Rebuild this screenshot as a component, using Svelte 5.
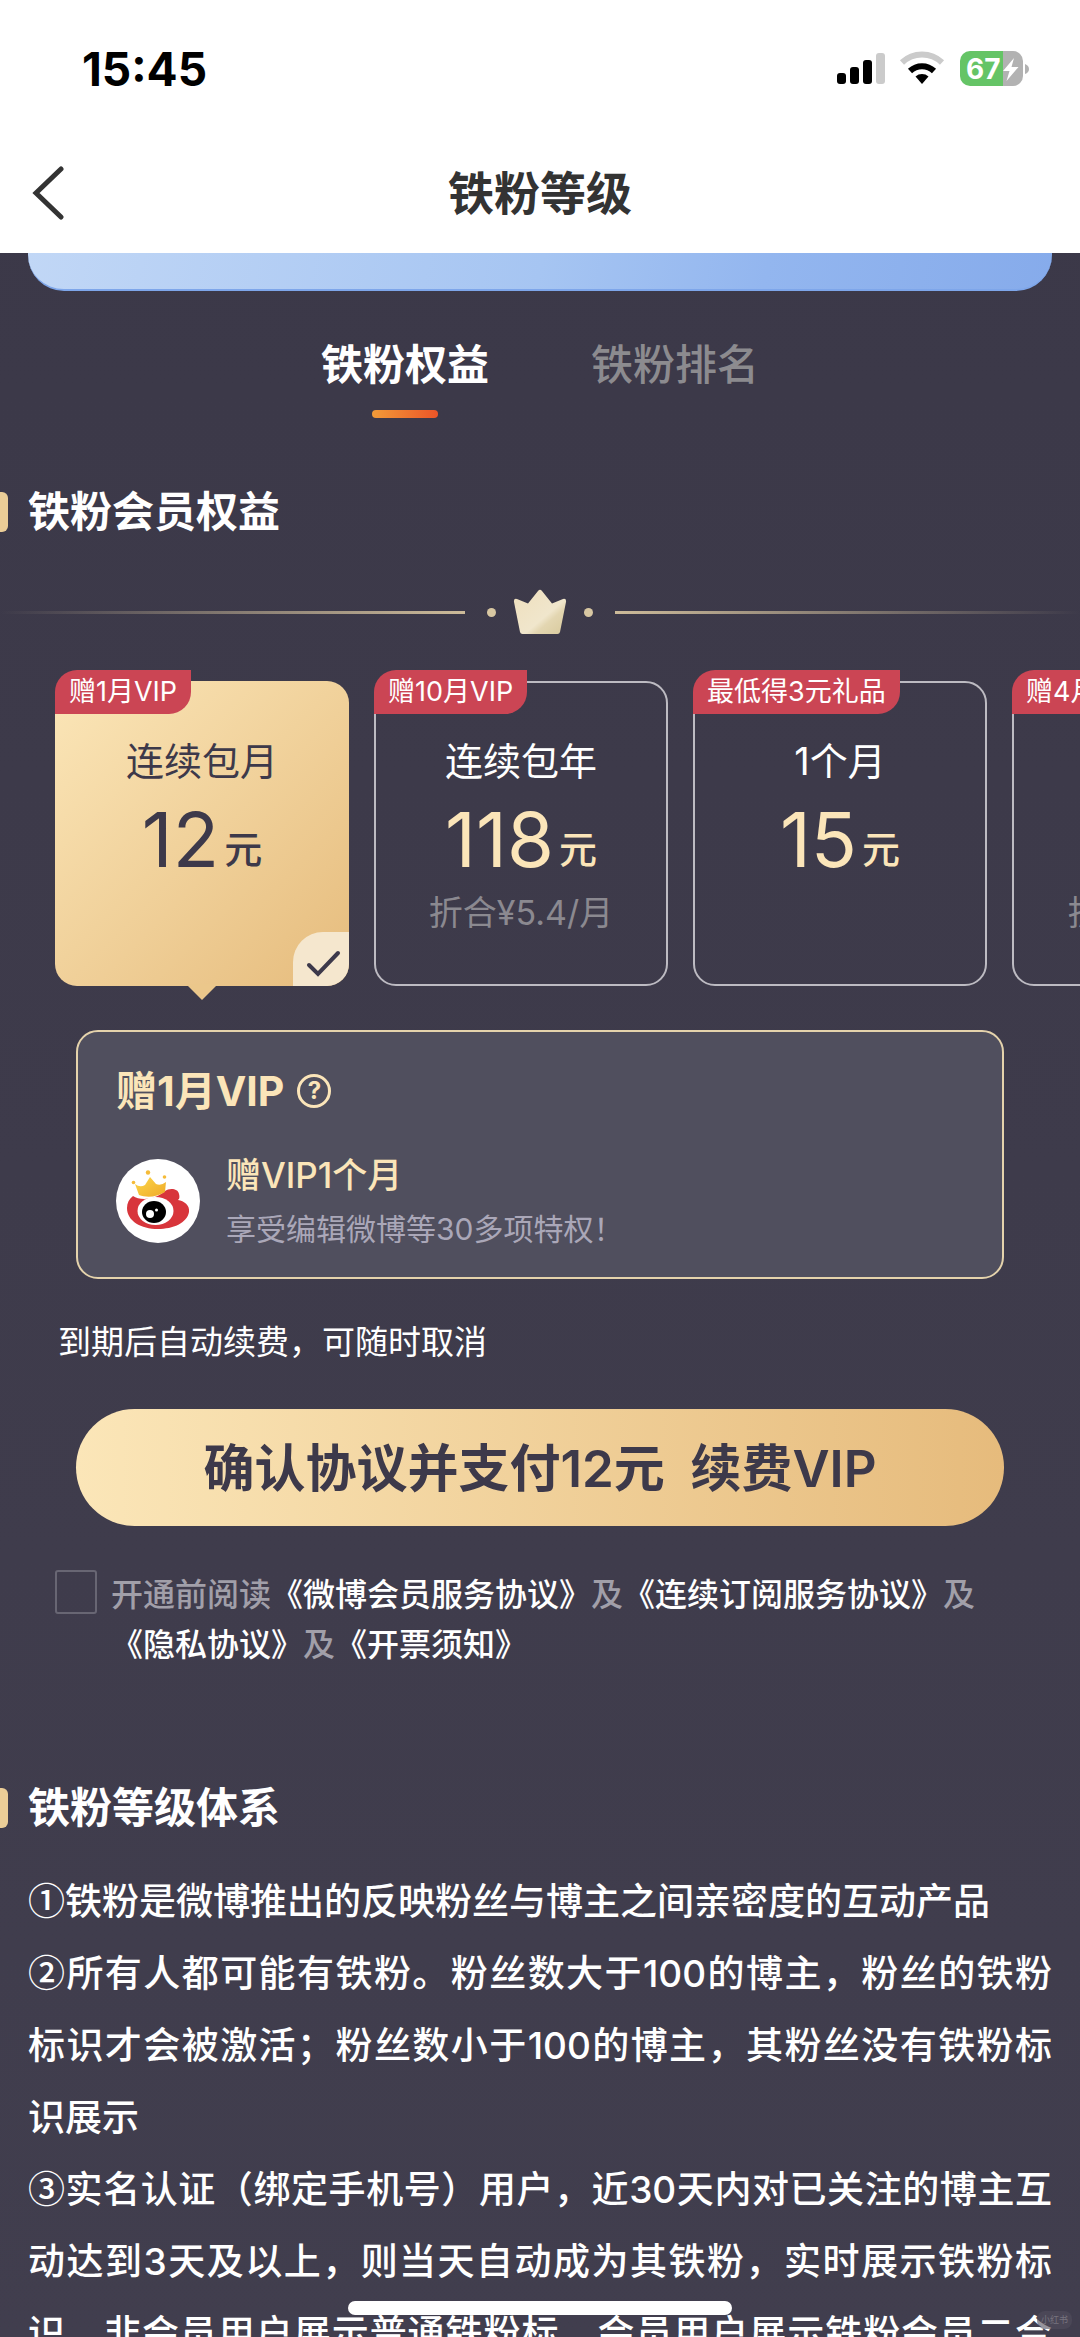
<script lang="ts">
  type Plan = { id: string; badge: string; name: string; price: number; note?: string };

  const tabs = ['铁粉权益', '铁粉排名'];
  const plans: Plan[] = [
    { id: 'month-auto', badge: '赠1月VIP', name: '连续包月', price: 12 },
    { id: 'year-auto', badge: '赠10月VIP', name: '连续包年', price: 118, note: '折合¥5.4/月' },
    { id: 'month', badge: '最低得3元礼品', name: '1个月', price: 15 },
    { id: 'season-auto', badge: '赠4月VIP', name: '连续包季', price: 35, note: '折合¥9.8/月' },
  ];
  const rules = [
    ['①', '铁粉是微博推出的反映粉丝与博主之间亲密度的互动产品'],
    [
      '②',
      '所有人都可能有铁粉。粉丝数大于100的博主，粉丝的铁粉标识才会被激活；粉丝数小于100的博主，其粉丝没有铁粉标识展示',
    ],
    [
      '③',
      '实名认证（绑定手机号）用户，近30天内对已关注的博主互动达到3天及以上，则当天自动成为其铁粉，实时展示铁粉标识，非会员用户展示普通铁粉标，会员用户展示铁粉会员二合一标识',
    ],
  ];

  let activeTab = $state(0);
  let selected = $state('month-auto');
  let agreed = $state(false);
  let current = $derived(plans.find((p) => p.id === selected) ?? plans[0]);
</script>

<div class="screen">
  <header>
    <div class="status">
      <time>15:45</time>
      <svg class="status-icons" viewBox="0 0 194 36" aria-hidden="true">
        <rect x="1" y="22" width="9" height="11" rx="3" />
        <rect x="14" y="16" width="9" height="17" rx="3" />
        <rect x="27" y="9" width="9" height="24" rx="3" />
        <rect x="40" y="2" width="9" height="31" rx="3" fill="#cbcbcb" />
        <g fill="none" stroke-width="6">
          <path d="M66 11.5a29 29 0 0 1 40 0" stroke="#cbcbcb" />
          <path d="M74 20a17.500 17.500 0 0 1 24 0" stroke="#000" />
        </g>
        <path d="M79.500 25.500a10 10 0 0 1 13 0L86 33z" />
        <path d="M134 0h33v35h-33a10 10 0 0 1-10-10V10a10 10 0 0 1 10-10z" fill="#65c466" />
        <path d="M167 0h10a10 10 0 0 1 10 10v15a10 10 0 0 1-10 10h-10z" fill="#b2b2b2" />
        <path d="M189 13q4 1.500 4 5t-4 5z" fill="#b2b2b2" />
        <text x="130" y="28" class="battery">67</text>
        <path d="M178 7l-11 13h6.500l-3 10 12-14h-7z" fill="#fff" />
      </svg>
    </div>
    <div class="titlebar">
      <button class="back" aria-label="返回">
        <svg viewBox="0 0 32 54"><path d="M29 3 4 27l25 24" fill="none" stroke="#333" stroke-width="5" stroke-linecap="round" /></svg>
      </button>
      <h1>铁粉等级</h1>
    </div>
  </header>

  <main>
    <div class="level-card"></div>

    <nav class="tabs">
      {#each tabs as tab, i}
        <button class:active={activeTab === i} onclick={() => (activeTab = i)}>{tab}</button>
      {/each}
    </nav>

    <h2>铁粉会员权益</h2>

    <div class="divider">
      <span class="line"></span>
      <span class="dot"></span>
      <svg viewBox="0 0 54 46" aria-hidden="true">
        <defs>
          <linearGradient id="crown" x1="0" y1="0" x2="1" y2="1">
            <stop offset="0" stop-color="#efdfbd" />
            <stop offset="0.600" stop-color="#f0e6cc" />
            <stop offset="0.700" stop-color="#e3d6b1" />
            <stop offset="1" stop-color="#d8c99c" />
          </linearGradient>
        </defs>
        <path d="M1 13q-.5-4 3-3l11 4.500L25 2q2-2.500 4 0l10 12.500L50 10q3.500-1 3 3l-6 30q-.5 2-2.500 2h-35Q7.500 45 7 43z" fill="url(#crown)" />
      </svg>
      <span class="dot"></span>
      <span class="line right"></span>
    </div>

    <div class="plans">
      {#each plans as plan (plan.id)}
        <label class="plan" class:selected={selected === plan.id}>
          <input type="radio" name="plan" value={plan.id} bind:group={selected} />
          <span class="badge">{plan.badge}</span>
          <span class="name">{plan.name}</span>
          <span class="price"><b>{plan.price}</b><span class="unit">元</span></span>
          {#if plan.note}
            <span class="note">{plan.note}</span>
          {/if}
          {#if selected === plan.id}
            <span class="check">
              <svg viewBox="0 0 56 54"><path d="M16 33l9 9 20-21" fill="none" stroke="#3d394a" stroke-width="4" stroke-linecap="round" /></svg>
            </span>
            <span class="arrow"></span>
          {/if}
        </label>
      {/each}
    </div>

    <section class="gift">
      <h3>
        {current.badge}
        <button class="help" aria-label="说明">?</button>
      </h3>
      <div class="gift-row">
        <svg class="logo" viewBox="0 0 84 84" aria-hidden="true">
          <defs>
            <linearGradient id="gold" x1="0" y1="0" x2="1" y2="1">
              <stop offset="0" stop-color="#fbd84a" />
              <stop offset="1" stop-color="#f0a928" />
            </linearGradient>
          </defs>
          <circle cx="42" cy="42" r="42" fill="#fff" />
          <path d="M17 37c7 5 22 4 32-5 4-3 13-3 14 3 1 4 0 5-1 6 6 1 12 5 11 12-2 11-16 17-31 17-17 0-31-8-31-21 0-5 2-9 6-12z" fill="#d8353b" />
          <ellipse cx="39.500" cy="52" rx="18" ry="14" fill="#fff" />
          <ellipse cx="38" cy="53" rx="12" ry="11" fill="#000" />
          <circle cx="34" cy="55" r="4" fill="#fff" />
          <circle cx="40.500" cy="51" r="1.500" fill="#fff" />
          <path d="M19 25q5 4 10 1l5-8 6 7q5 2 10-2l-1 10c-8 5-18 6-26 3z" fill="url(#gold)" />
          <g fill="#f5bb38">
            <circle cx="17.500" cy="23.500" r="1.800" />
            <circle cx="32" cy="13.500" r="2.200" />
            <circle cx="48.500" cy="18" r="1.800" />
          </g>
        </svg>
        <div class="gift-text">
          <strong>赠VIP1个月</strong>
          <span>享受编辑微博等30多项特权！</span>
        </div>
      </div>
    </section>

    <p class="renew">到期后自动续费，可随时取消</p>

    <button class="pay">确认协议并支付{current.price}元&nbsp;&nbsp;续费VIP</button>

    <div class="agreement">
      <input id="agree" type="checkbox" bind:checked={agreed} />
      <label for="agree"
        >开通前阅读<a href="#member">《微博会员服务协议》</a>及<a href="#subscribe">《连续订阅服务协议》</a>及<a href="#privacy">《隐私协议》</a>及<a href="#invoice">《开票须知》</a></label
      >
    </div>

    <h2 class="system">铁粉等级体系</h2>

    <div class="rules">
      {#each rules as [mark, text]}
        <p><span class="mark">{mark}</span>{text}</p>
      {/each}
    </div>
  </main>

  <div class="home-bar"></div>
  <span class="watermark">小红书</span>
</div>

<style>
  :global(body) {
    margin: 0;
  }

  .screen {
    position: relative;
    display: flex;
    flex-direction: column;
    height: 100vh;
    overflow: hidden;
    background: linear-gradient(#3b3848, #413e4e);
    color: #fff;
    font-family: Inter, 'Noto Sans CJK SC', sans-serif;
  }

  button {
    padding: 0;
    border: none;
    background: none;
    color: inherit;
    font: inherit;
    cursor: pointer;
  }

  h1,
  h2,
  h3,
  p {
    margin: 0;
  }

  header {
    flex: none;
    background: #fff;
    color: #333;
  }

  .status {
    display: flex;
    justify-content: space-between;
    align-items: center;
    height: 50px;
    padding: 44px 50px 38px 82px;
  }

  .status time {
    color: #000;
    font-size: 46px;
    font-weight: 700;
    line-height: 50px;
  }

  .status-icons {
    width: 194px;
    height: 36px;
  }

  .battery {
    fill: #fff;
    font-size: 28px;
    font-weight: 700;
  }

  .titlebar {
    display: grid;
    grid-template-columns: 80px 1fr 80px;
    align-items: center;
    height: 121px;
  }

  .back {
    padding-left: 32px;
    text-align: left;
  }

  .back svg {
    display: block;
    width: 32px;
    height: 54px;
  }

  h1 {
    font-size: 46px;
    line-height: 60px;
    text-align: center;
  }

  main {
    flex: 1;
    min-height: 0;
    overflow: hidden auto;
    scrollbar-width: none;
  }

  .level-card {
    box-sizing: border-box;
    height: 38px;
    margin: 0 28px;
    border-bottom: 2px solid #7ea6ea;
    border-radius: 0 0 36px 36px;
    background: linear-gradient(100deg, #c1d7f6, #a6c5f2 50%, #93b6ef 72%, #86abeb);
  }

  .tabs {
    display: flex;
    justify-content: center;
    gap: 102px;
    margin-top: 44px;
    font-size: 42px;
    line-height: 60px;
  }

  .tabs button {
    display: flex;
    flex-direction: column;
    align-items: center;
    gap: 15px;
    color: #8c8b8f;
    font-weight: 500;
  }

  .tabs button::after {
    content: '';
    width: 66px;
    height: 8px;
    border-radius: 4px;
  }

  .tabs .active {
    color: #fff;
    font-weight: 700;
  }

  .tabs .active::after {
    background: linear-gradient(90deg, #f29b38, #eb5528);
  }

  h2 {
    display: flex;
    align-items: center;
    gap: 20px;
    margin-top: 64px;
    font-size: 42px;
    line-height: 60px;
  }

  h2::before {
    content: '';
    width: 8px;
    height: 40px;
    border-radius: 0 6px 6px 0;
    background: #ebcd97;
  }

  .system {
    margin-top: 108px;
  }

  .divider {
    display: flex;
    justify-content: center;
    align-items: center;
    gap: 22px;
    margin-top: 47px;
  }

  .divider svg {
    width: 54px;
    height: 46px;
    margin: 0 -5px;
  }

  .line {
    flex: 1;
    height: 3px;
    background: linear-gradient(90deg, transparent, #cdbb9a);
  }

  .line.right {
    background: linear-gradient(270deg, transparent, #cdbb9a);
  }

  .dot {
    width: 9px;
    height: 9px;
    border-radius: 50%;
    background: #d8c7a2;
  }

  .plans {
    display: flex;
    gap: 25px;
    padding: 46px 55px 44px;
    overflow: auto hidden;
    scrollbar-width: none;
  }

  .plan {
    position: relative;
    box-sizing: border-box;
    flex: none;
    display: flex;
    flex-direction: column;
    align-items: center;
    gap: 14px;
    width: 294px;
    height: 305px;
    padding-top: 54px;
    border: 2px solid #bdbbc2;
    border-radius: 22px;
    cursor: pointer;
  }

  .plan input {
    position: absolute;
    opacity: 0;
    pointer-events: none;
  }

  .plan.selected {
    border-color: transparent;
    background: linear-gradient(135deg, #fbe6b8, #e6bc7d) border-box;
    color: #3d394a;
  }

  .badge {
    position: absolute;
    top: -13px;
    left: -2px;
    padding: 0 14px;
    border-radius: 22px 0;
    background: #cb4554;
    color: #fff;
    font-size: 27px;
    line-height: 44px;
    white-space: nowrap;
  }

  .name {
    font-size: 38px;
    line-height: 48px;
  }

  .price {
    display: flex;
    align-items: flex-end;
    gap: 5px;
    color: #fbe5b9;
  }

  .price b {
    font-size: 76px;
    font-weight: 400;
    line-height: 80px;
  }

  .unit {
    font-size: 38px;
    font-weight: 500;
    line-height: 60px;
  }

  .selected .price {
    color: inherit;
  }

  .note {
    color: #8b8990;
    font-size: 34px;
    line-height: 40px;
  }

  .check {
    position: absolute;
    right: -2px;
    bottom: -2px;
    width: 56px;
    height: 54px;
    border-radius: 30px 0 22px;
    background: #f5e7ce;
  }

  .check svg {
    display: block;
  }

  .arrow {
    position: absolute;
    top: 100%;
    left: 50%;
    margin-left: -16px;
    border: 16px solid transparent;
    border-top-color: #ebc78b;
    border-bottom: none;
  }

  .gift {
    display: flex;
    flex-direction: column;
    gap: 38px;
    margin: 0 76px;
    padding: 35px 38px 28px;
    border: 2px solid #e5d3ac;
    border-radius: 22px;
    background: #504f5e;
    color: #fbe5b9;
  }

  h3 {
    display: flex;
    align-items: center;
    gap: 13px;
    font-size: 41px;
    line-height: 48px;
  }

  .help {
    box-sizing: border-box;
    width: 34px;
    height: 34px;
    border: 3px solid;
    border-radius: 50%;
    font-size: 24px;
    font-weight: 700;
    line-height: 28px;
  }

  .gift-row {
    display: flex;
    align-items: center;
    gap: 26px;
  }

  .logo {
    width: 84px;
    height: 84px;
  }

  .gift-text {
    display: flex;
    flex-direction: column;
    gap: 12px;
    font-size: 30px;
    line-height: 40px;
    color: #aaa7b8;
  }

  .gift-text strong {
    color: #fbe5b9;
    font-size: 35px;
    font-weight: 500;
    line-height: 44px;
  }

  .renew {
    margin: 39px 58px 0;
    font-size: 33px;
    line-height: 48px;
  }

  .pay {
    display: block;
    box-sizing: border-box;
    width: calc(100% - 152px);
    height: 117px;
    margin: 43px 76px 0;
    padding-bottom: 6px;
    border-radius: 59px;
    background: linear-gradient(90deg, #fbe6b8, #e6bb7c);
    color: #3d394a;
    font-size: 51px;
    font-weight: 600;
  }

  .agreement {
    display: flex;
    align-items: flex-start;
    gap: 14px;
    margin: 44px 80px 0 55px;
    color: #a19fa9;
    font-size: 32px;
    font-weight: 500;
    line-height: 50px;
  }

  .agreement input {
    appearance: none;
    box-sizing: border-box;
    flex: none;
    width: 42px;
    height: 44px;
    margin: 0;
    border: 2px solid #686673;
    border-radius: 3px;
  }

  .agreement input:checked {
    background: #ebcd97;
  }

  .agreement a {
    color: #fff;
    text-decoration: none;
  }

  .rules {
    margin: 28px 28px 0;
    font-size: 37px;
    font-weight: 500;
    line-height: 72px;
    text-align: justify;
  }

  /* Inter's circled digits are wider than one CJK cell */
  .mark {
    font-family: 'Noto Sans CJK SC', sans-serif;
    line-height: 1;
  }

  .home-bar {
    position: absolute;
    bottom: 22px;
    left: 50%;
    width: 384px;
    height: 14px;
    margin-left: -192px;
    border-radius: 7px;
    background: #fff;
  }

  .watermark {
    position: absolute;
    right: 8px;
    bottom: 8px;
    padding: 0 4px;
    border-radius: 8px;
    background: rgba(82, 79, 94, 0.6);
    color: #77747f;
    font-size: 9px;
    line-height: 18px;
  }
</style>
